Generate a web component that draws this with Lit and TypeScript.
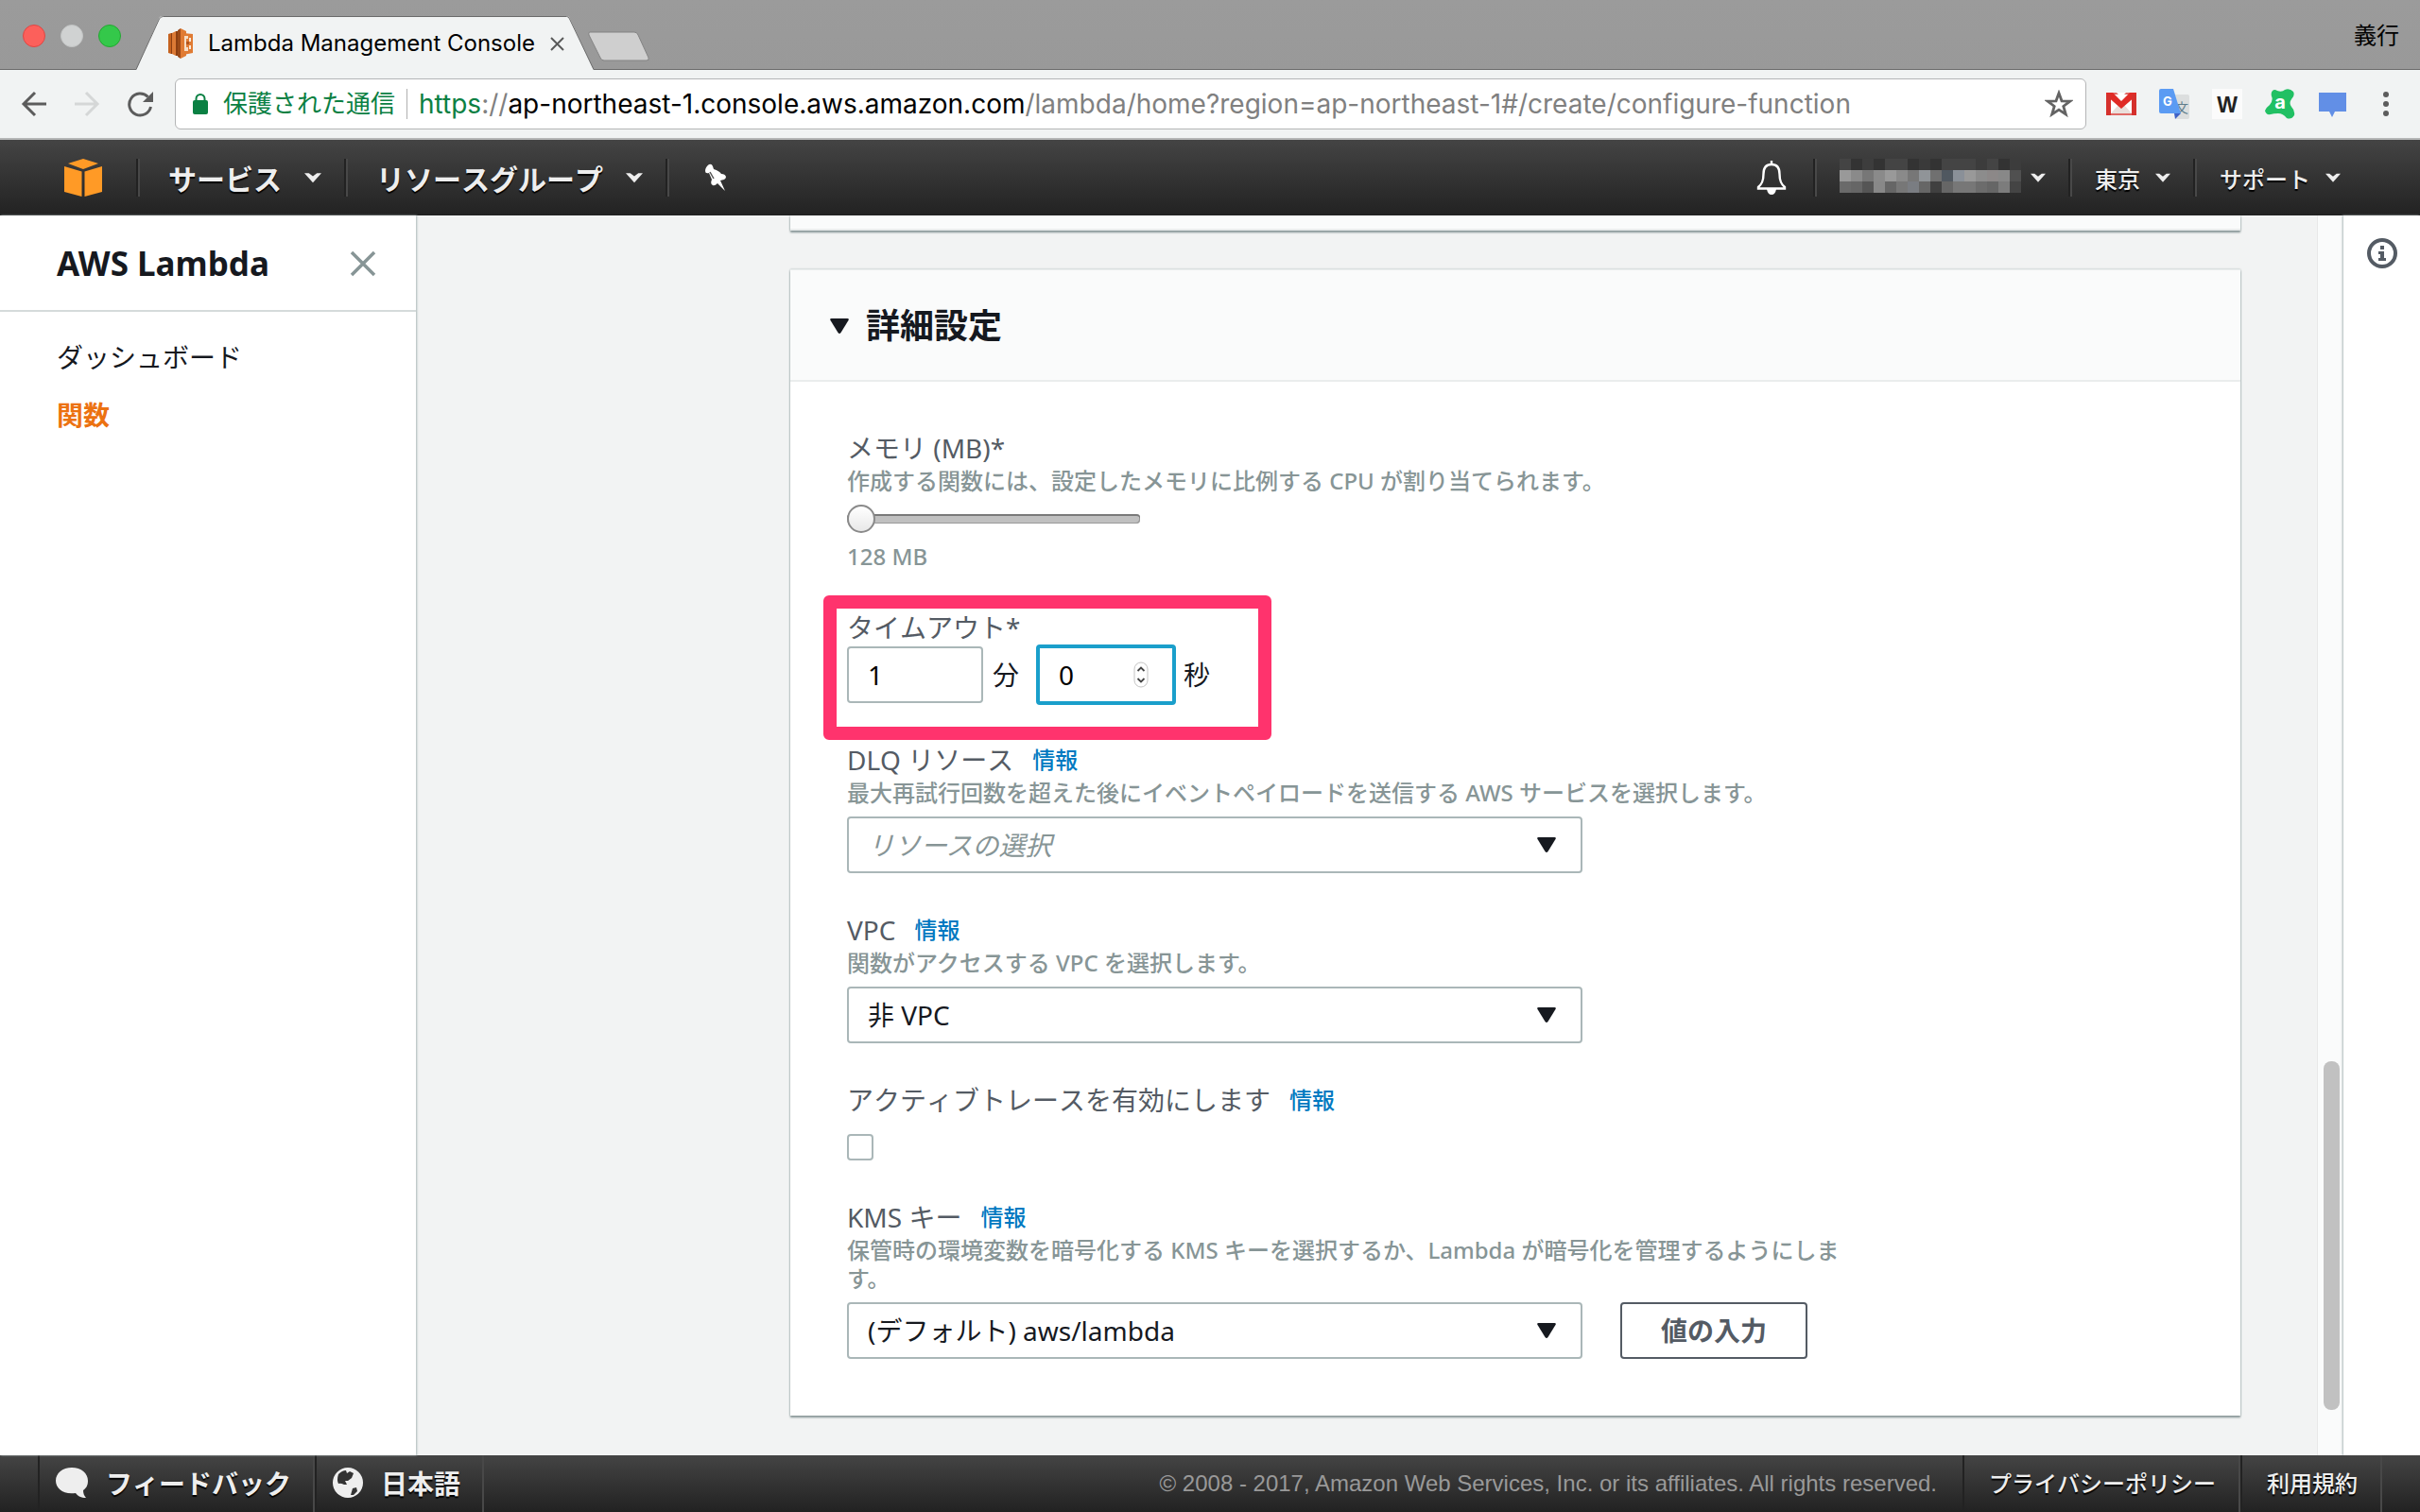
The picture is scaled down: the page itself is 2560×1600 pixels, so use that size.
import { LitElement, html, svg, css } from "lit";
import { customElement, property, state } from "lit/decorators.js";

const caret = (width: number) => html`
  <svg width=${width} height="12" viewBox="0 0 19 12" aria-hidden="true">
    <path d="M0 1h5l4.500 3.500L14 1h5l-9.500 10.500z" fill="currentColor"/>
  </svg>`;

const triangle = html`
  <svg class="triangle" width="20" height="16" viewBox="0 0 20 16" aria-hidden="true">
    <path d="M1.500 0h17q2 0 1 2l-8 13q-1.500 2-3 0l-8-13q-1-2 1-2z" fill="#16191f"/>
  </svg>`;

@customElement("browser-chrome")
export class BrowserChrome extends LitElement {
  @state() private editing = false;

  static styles = css`
    :host {
      display: block;
      font-family: Inter, "Noto Sans CJK JP", sans-serif;
      color: #000;
    }
    button {
      appearance: none;
      border: 0;
      margin: 0;
      padding: 0;
      background: none;
      font: inherit;
      color: inherit;
      text-align: left;
      display: flex;
    }
    svg {
      display: block;
      flex: none;
    }
    .strip {
      display: flex;
      align-items: flex-end;
      height: 74px;
      background: linear-gradient(#9b9b9b, #999);
      box-shadow: inset 0 -1px #6b6b6b;
    }
    .lights {
      display: flex;
      gap: 16px;
      align-self: center;
      padding: 2px 16px 0 24px;
    }
    .light {
      width: 24px;
      height: 24px;
      border-radius: 50%;
      box-sizing: border-box;
    }
    .close {
      background: #fc605b;
      border: 1px solid #de4643;
    }
    .minimize {
      background: #d0d2d2;
      border: 1px solid #c2c4c4;
    }
    .maximize {
      background: #34c84a;
      border: 1px solid #24a732;
    }
    .tab {
      position: relative;
      width: 484px;
      height: 57px;
    }
    .tab-shape {
      position: absolute;
      inset: 0;
    }
    .tab-content {
      position: relative;
      display: flex;
      align-items: center;
      height: 58px;
      padding: 0 36px 0 34px;
      gap: 16px;
    }
    .tab-title {
      flex: 1;
      font-size: 24px;
      line-height: 32px;
      white-space: nowrap;
    }
    .new-tab {
      margin: 0 auto 9px -7px;
    }
    .person {
      align-self: center;
      padding: 2px 22px 0 0;
      font-size: 24px;
      line-height: 32px;
    }
    .toolbar {
      display: flex;
      align-items: center;
      height: 74px;
      box-sizing: border-box;
      padding: 0 20px 0 22px;
      background: #f1f3f3;
      border-bottom: 2px solid #b5b6b6;
    }
    .nav {
      display: flex;
      gap: 28px;
      padding-right: 22px;
    }
    .address {
      flex: 1;
      display: flex;
      align-items: center;
      height: 54px;
      box-sizing: border-box;
      border: 1px solid #b4b5b6;
      border-radius: 6px;
      background: #fff;
      padding: 0 13px 0 18px;
      font-size: 28px;
      line-height: 36px;
      white-space: nowrap;
    }
    .secure {
      align-items: center;
      gap: 16px;
      color: #0b8043;
      padding-right: 12px;
      border-right: 1px solid #b0b0b0;
      font-size: 26px;
      line-height: 32px;
    }
    .url {
      flex: 1;
      display: block;
      padding-left: 12px;
      color: #808080;
    }
    input.url {
      border: 0;
      outline: 0;
      font: inherit;
      color: #000;
    }
    .scheme {
      color: #0b8043;
    }
    .host {
      color: #000;
    }
    .extensions {
      display: flex;
      align-items: center;
      gap: 24px;
      padding-left: 21px;
    }
  `;

  render() {
    return html`
      <div class="strip">
        <div class="lights">
          <button class="light close" aria-label="close window"></button>
          <button class="light minimize" aria-label="minimize window"></button>
          <button class="light maximize" aria-label="maximize window"></button>
        </div>
        <div class="tab">
          <svg class="tab-shape" width="484" height="57" viewBox="0 0 484 57" aria-hidden="true">
            <path d="M0 57L24 3q1-3 4-3h428q2 0 3 3l25 54z" fill="#f1f3f3"/>
            <path d="M0 56.500L24.500 3q1.500-2.500 4-2.500h427q2 0 3 2.500l25.500 53.500" fill="none" stroke="#6b6b6b"/>
          </svg>
          <div class="tab-content">
            <svg width="26" height="32" viewBox="0 0 26 32" aria-hidden="true">
              <path d="M0 6l3-1v22l-3-1z" fill="#c5621f"/>
              <path d="M3 5h1v22H3z" fill="#8c3f12"/>
              <path d="M4 5l4-2v26l-4-2z" fill="#dc7a35"/>
              <path d="M8 3h2v26H8z" fill="#8c3f12"/>
              <path d="M10 2l3-2v32l-3-2z" fill="#9c4a18"/>
              <path d="M13 0l6 3v26l-6 3z" fill="#e07b33"/>
              <path d="M16 5l10 1v20l-10 2z" fill="#e07b33"/>
              <path d="M17 8h4v3h-2v9h2v4h-4z" fill="#f6ddc6"/>
              <path d="M22 10h2v4h-2zM22 18h2v4h-2z" fill="#f9e8d8"/>
              <path d="M19 14h3v3h-3z" fill="#b3541c"/>
            </svg>
            <span class="tab-title">Lambda Management Console</span>
            <button aria-label="close tab">
              <svg width="15" height="15" viewBox="0 0 15 15" aria-hidden="true">
                <path d="M1 1l13 13M14 1L1 14" stroke="#5a5a5a" stroke-width="2" fill="none"/>
              </svg>
            </button>
          </div>
        </div>
        <button class="new-tab" aria-label="new tab">
          <svg width="67" height="32" viewBox="0 0 67 32" aria-hidden="true">
            <path d="M3 1h47q3 0 4 3l11 24q1 3-2 3H18q-3 0-4-3L2 4Q1 1 3 1z" fill="#cfcfcf" stroke="#838383"/>
          </svg>
        </button>
        <span class="person">義行</span>
      </div>
      <div class="toolbar">
        <div class="nav">
          <button aria-label="back">
            <svg width="28" height="28" viewBox="0 0 28 28" fill="none" stroke="#5c5c5c" stroke-width="3" aria-hidden="true">
              <path d="M27 14H3M15 2L3 14l12 12"/>
            </svg>
          </button>
          <button aria-label="forward">
            <svg width="28" height="28" viewBox="0 0 28 28" fill="none" stroke="#d5d7d7" stroke-width="3" aria-hidden="true">
              <path d="M1 14h24M13 2l12 12-12 12"/>
            </svg>
          </button>
          <button aria-label="reload">
            <svg width="29" height="28" viewBox="0 0 29 28" aria-hidden="true">
              <path d="M22.500 6.500A11.500 11.500 0 1 0 25.500 17" fill="none" stroke="#5c5c5c" stroke-width="3"/>
              <path d="M28 1v11H17z" fill="#5c5c5c"/>
            </svg>
          </button>
        </div>
        <div class="address">
          <button class="secure">
            <svg width="16" height="22" viewBox="0 0 16 22" aria-hidden="true">
              <path d="M3.500 9V5.500a4.500 4.500 0 0 1 9 0V9" fill="none" stroke="#0b8043" stroke-width="2"/>
              <rect y="7" width="16" height="15" rx="2" fill="#0b8043"/>
            </svg>
            保護された通信
          </button>
          ${this.editing
            ? html`<input class="url" aria-label="address" autofocus
                .value=${"https://ap-northeast-1.console.aws.amazon.com/lambda/home?region=ap-northeast-1#/create/configure-function"}
                @blur=${() => (this.editing = false)}>`
            : html`<button class="url" @click=${() => (this.editing = true)}><span class="scheme">https</span>://<span class="host">ap-northeast-1.console.aws.amazon.com</span>/lambda/home?region=ap-northeast-1#/create/configure-function</button>`}
          <button aria-label="bookmark">
            <svg width="30" height="30" viewBox="0 0 30 30" aria-hidden="true">
              <path d="M15 3.500l3 8.300 8.800.3-7 5.400 2.500 8.500-7.300-4.900L7.700 26l2.500-8.500-7-5.400 8.800-.3z" fill="none" stroke="#636363" stroke-width="2.800"/>
            </svg>
          </button>
        </div>
        <div class="extensions">
          <button aria-label="Gmail">
            <svg width="32" height="32" viewBox="0 0 32 32" aria-hidden="true">
              <rect y="4" width="32" height="24" rx="1" fill="#e06a66"/>
              <path d="M5 6h22v20H5z" fill="#fff"/>
              <path d="M5 26l8-9 3 3 3-3 8 9z" fill="#eadfdb"/>
              <path d="M0 4h7l9 9 9-9h7v3L16 21 0 7z" fill="#e02b26"/>
              <path d="M11 4h10l-5 5z" fill="#fff"/>
              <path d="M0 6h5v22H0zM27 6h5v22h-5z" fill="#d5302c"/>
            </svg>
          </button>
          <button aria-label="Google Translate">
            <svg width="32" height="32" viewBox="0 0 32 32" aria-hidden="true">
              <path d="M14 6h16q2 0 2 2v22q0 2-2 2H18z" fill="#dcdede"/>
              <text x="17" y="25" font-size="14" font-family="Noto Sans CJK JP" fill="#607d8b">文</text>
              <path d="M16 26h7l-6 6z" fill="#3f62c6"/>
              <path d="M2 0h13l8 26H2q-2 0-2-2V2q0-2 2-2z" fill="#5b9bf3"/>
              <text x="4" y="18" font-size="13" font-weight="700" font-family="Inter" fill="#fff">G</text>
            </svg>
          </button>
          <button aria-label="Wikipedia">
            <svg width="32" height="32" viewBox="0 0 32 32" aria-hidden="true">
              <path d="M0 0h32v32H0z" fill="#fbfbfb"/>
              <text x="16" y="25" text-anchor="middle" font-size="23" font-weight="700" font-family="Liberation Sans" fill="#222">W</text>
            </svg>
          </button>
          <button aria-label="Avast">
            <svg width="32" height="32" viewBox="0 0 32 32" aria-hidden="true">
              <path d="M8 2q2-2 5 0 5 2 8-1 5-2 9 2 2 4-2 8-3 4 0 8 4 4 3 9-3 5-8 3-4-5-9-5t-8 1q-5 1-6-4 1-3 5-6 4-5 2-9-1-4 1-6z" fill="#21c063"/>
              <text x="16" y="21" text-anchor="middle" font-size="20" font-weight="700" font-family="Inter" fill="#fff">a</text>
            </svg>
          </button>
          <button aria-label="chat">
            <svg width="32" height="32" viewBox="0 0 32 32" aria-hidden="true">
              <path d="M1 4h29v20H18l-3 6-3-6H1z" fill="#628fe6"/>
            </svg>
          </button>
          <button aria-label="menu">
            <svg width="32" height="32" viewBox="0 0 32 32" fill="#5c5c5c" aria-hidden="true">
              <circle cx="16" cy="6" r="3"/><circle cx="16" cy="16" r="3"/><circle cx="16" cy="26" r="3"/>
            </svg>
          </button>
        </div>
      </div>
    `;
  }
}

const mosaic = [
  ["#444", "#333", "#3d3d3d", "#333", "#444", "#444", "#333", "#3a3a3a", "#333", "#444", "#444", "#444", "#3c3c3c", "#444", "#333", "#3c3c3c"],
  ["#999", "#8a8a8a", "#777", "#8a8a8a", "#999", "#8a8a8a", "#777", "#909498", "#707070", "#505860", "#8a9098", "#999", "#8c8c8c", "#8c8888", "#888", "#505050"],
  ["#6a6a6a", "#666", "#555", "#888", "#666", "#777", "#7a7d82", "#666", "#404040", "#666", "#777", "#777", "#6c6c6c", "#666", "#7c7c7c", "#444"],
];

@customElement("console-bar")
export class ConsoleBar extends LitElement {
  static styles = css`
    :host {
      display: flex;
      align-items: center;
      height: 80px;
      padding: 0 60px 0 68px;
      box-sizing: border-box;
      background: linear-gradient(#444, #222);
      color: #eee;
      font-family: "Noto Sans CJK JP", sans-serif;
      font-kerning: none;
    }
    svg {
      display: block;
      flex: none;
    }
    a,
    button {
      appearance: none;
      display: flex;
      align-items: center;
      box-sizing: border-box;
      height: 40px;
      margin: 0;
      padding: 0 24px 0 32px;
      border: 0;
      background: none;
      color: inherit;
      font: inherit;
      font-kerning: none;
      text-shadow: 0 2px 1px #000;
      white-space: nowrap;
    }
    .home {
      padding: 0;
      margin-right: 36px;
    }
    .divided {
      border-left: 2px solid #222;
      box-shadow: inset 2px 0 #484848;
    }
    .large {
      font-size: 30px;
      font-weight: 700;
      gap: 24px;
    }
    .pin {
      padding-left: 34px;
    }
    .small {
      font-size: 24px;
      font-weight: 500;
      gap: 16px;
      padding: 0 24px 0 26px;
    }
    .bell {
      margin-left: auto;
      padding: 0 28px;
    }
    .account {
      gap: 10px;
    }
  `;

  render() {
    return html`
      <a class="home" href="#home" aria-label="AWS">
        <svg width="40" height="40" viewBox="0 0 40 40" fill="#ff9a26" aria-hidden="true">
          <path d="M4 5l16-5 16 5-16 6z"/>
          <path d="M0 8l18.500 5.500V40L0 35z"/>
          <path d="M40 8l-18.500 5.500V40L40 35z"/>
        </svg>
      </a>
      <button class="divided large">サービス ${caret(18)}</button>
      <button class="divided large">リソースグループ ${caret(18)}</button>
      <button class="divided pin" aria-label="pin">
        <svg width="30" height="30" viewBox="0 0 30 30" fill="#fff" aria-hidden="true">
          <path d="M10 1q3-1 4 2l1 3q6 2 8 5 4 0 5 3 0 2-2 3l-4 1 5 11-8-8q-3 3-5 2-3-1-1-6l-3-7Q6 11 6 8q0-4 4-7z"/>
          <path d="M11 9l4 7" stroke="#555" stroke-width="1.500"/>
        </svg>
      </button>
      <button class="bell" aria-label="notifications">
        <svg width="32" height="36" viewBox="0 0 32 36" fill="none" stroke="#fff" stroke-width="2.400" aria-hidden="true">
          <path d="M16 4c6 0 8.500 4 8.500 10 0 8 2 11 5.500 14v1.500H2V28c3.500-3 5.500-6 5.500-14C7.500 8 10 4 16 4z"/>
          <path d="M16 0v4"/>
          <path d="M11 30h10q-1 6-5 6t-5-6z" fill="#fff" stroke="none"/>
        </svg>
      </button>
      <button class="divided small account" aria-label="account">
        <svg width="192" height="40" viewBox="0 0 192 40" shape-rendering="crispEdges" aria-hidden="true">
          ${mosaic.map((row, y) => row.map((fill, x) => svg`<rect x=${x * 12} y=${y * 12} width="12" height="12" fill=${fill}/>`))}
        </svg>
        ${caret(16)}
      </button>
      <button class="divided small">東京 ${caret(16)}</button>
      <button class="divided small">サポート ${caret(16)}</button>
    `;
  }
}

@customElement("side-nav")
export class SideNav extends LitElement {
  static styles = css`
    :host {
      display: block;
      background: #fff;
      color: #16191f;
      font-family: "Noto Sans", "Noto Sans CJK JP", sans-serif;
      box-shadow: 1px 0 2px #aab7b8;
      z-index: 1;
    }
    .head {
      display: flex;
      align-items: center;
      justify-content: space-between;
      height: 102px;
      box-sizing: border-box;
      padding: 2px 42px 0 60px;
      border-bottom: 2px solid #d5dbdb;
    }
    h1 {
      margin: 0;
      font-size: 35px;
      line-height: 44px;
      font-weight: 700;
    }
    button {
      appearance: none;
      display: flex;
      border: 0;
      margin: 0;
      padding: 0;
      background: none;
    }
    ul {
      list-style: none;
      margin: 0;
      padding: 28px 60px;
      display: grid;
      gap: 21px;
      font-size: 28px;
      line-height: 40px;
    }
    a {
      color: inherit;
      text-decoration: none;
    }
    .current {
      color: #ec7211;
      font-weight: 700;
    }
  `;

  render() {
    return html`
      <div class="head">
        <h1>AWS Lambda</h1>
        <button aria-label="close">
          <svg width="28" height="28" viewBox="0 0 28 28" aria-hidden="true">
            <path d="M2 2l24 24M26 2L2 26" stroke="#879596" stroke-width="3.500" fill="none"/>
          </svg>
        </button>
      </div>
      <ul>
        <li><a href="#dashboard">ダッシュボード</a></li>
        <li><a class="current" href="#functions" aria-current="page">関数</a></li>
      </ul>
    `;
  }
}

@customElement("settings-card")
export class SettingsCard extends LitElement {
  @property({ type: Number }) memory = 128;

  static styles = css`
    :host {
      display: block;
      background: #fff;
      border-top: 1px solid #eaeded;
      box-shadow: 0 2px 2px #879596, 0 0 2px #aab7b8;
      color: #16191f;
      font-family: "Noto Sans", "Noto Sans CJK JP", sans-serif;
      font-size: 28px;
      line-height: 40px;
    }
    svg {
      display: block;
      flex: none;
    }
    header {
      background: #fafbfb;
      border-bottom: 2px solid #eaeded;
      padding: 37px 42px 35px;
    }
    h2 {
      margin: 0;
      font-size: 36px;
      line-height: 44px;
    }
    button {
      appearance: none;
      box-sizing: border-box;
      margin: 0;
      background: none;
      font: inherit;
      color: inherit;
    }
    .toggle {
      display: flex;
      align-items: center;
      gap: 18px;
      padding: 0;
      border: 0;
    }
    .body {
      display: grid;
      gap: 40px;
      padding: 50px 60px 60px;
    }
    .field {
      position: relative;
      max-width: 1060px;
    }
    .caption {
      display: flex;
      align-items: center;
      gap: 20px;
      color: #545b64;
      font-kerning: none;
    }
    .caption a {
      font-size: 24px;
      font-weight: 500;
      color: #0079c1;
      text-decoration: none;
    }
    .hint {
      margin: 0;
      font-size: 24px;
      line-height: 30px;
      font-weight: 500;
      color: #879596;
    }
    .slider {
      appearance: none;
      display: block;
      width: 310px;
      height: 50px;
      margin: 0;
      background: none;
    }
    .slider::-webkit-slider-runnable-track {
      height: 10px;
      border-radius: 4px;
      background: #c0c0c0;
      box-shadow: inset 0 2px #7a7a7a, inset -1px -1px #9a9a9a;
    }
    .slider::-webkit-slider-thumb {
      appearance: none;
      box-sizing: border-box;
      width: 30px;
      height: 30px;
      margin-top: -10px;
      border: 2px solid #8a8a8a;
      border-radius: 50%;
      background: linear-gradient(#fff, #e8e8e8);
    }
    .duration {
      display: flex;
      align-items: center;
      height: 60px;
    }
    .number {
      position: relative;
      display: flex;
    }
    .number input {
      appearance: textfield;
      box-sizing: border-box;
      width: 144px;
      height: 60px;
      margin: 0;
      padding: 0 20px;
      border: 2px solid #aab7b8;
      border-radius: 4px;
      outline: 0;
      background: #fff;
      color: #000;
      font: inherit;
    }
    .number input::-webkit-inner-spin-button {
      appearance: none;
      margin: 0;
    }
    .number .active {
      width: 148px;
      height: 64px;
      border: 4px solid #1a9fcb;
    }
    .stepper {
      position: absolute;
      right: 29px;
      top: 18px;
    }
    .minutes {
      padding: 0 18px 0 10px;
    }
    .seconds {
      padding-left: 8px;
    }
    .highlight {
      position: absolute;
      left: -25px;
      top: -14px;
      width: 446px;
      height: 125px;
      border: 14px solid #ff336d;
      border-radius: 6px;
      pointer-events: none;
    }
    .row {
      display: flex;
      gap: 40px;
    }
    .select {
      position: relative;
      flex: 0 1 778px;
      margin-top: 10px;
    }
    .select svg {
      position: absolute;
      right: 28px;
      top: 22px;
      pointer-events: none;
    }
    select {
      appearance: none;
      display: block;
      box-sizing: border-box;
      width: 100%;
      height: 60px;
      margin: 0;
      padding: 0 60px 0 20px;
      border: 2px solid #aab7b8;
      border-radius: 4px;
      background: #fff;
      color: #16191f;
      font: inherit;
    }
    .placeholder {
      color: #879596;
      font-style: italic;
    }
    .single {
      display: flex;
    }
    .check {
      appearance: none;
      display: block;
      box-sizing: border-box;
      width: 28px;
      height: 28px;
      margin: 16px 0 0;
      border: 2px solid #aab7b8;
      border-radius: 4px;
      background: #fff;
    }
    .enter {
      margin-top: 10px;
      height: 60px;
      padding: 0 41px;
      border: 2px solid #545b64;
      border-radius: 4px;
      color: #545b64;
      font-weight: 700;
    }
  `;

  private info(topic: string) {
    return html`<a href="#info-${topic}">情報</a>`;
  }

  private select(id: string, value: string, placeholder = false) {
    return html`
      <div class="select">
        <select id=${id} class=${placeholder ? "placeholder" : ""}><option>${value}</option></select>
        ${triangle}
      </div>`;
  }

  render() {
    return html`
      <header>
        <h2><button class="toggle" aria-expanded="true">${triangle} 詳細設定</button></h2>
      </header>
      <div class="body">
        <div class="field">
          <div class="caption"><label for="memory">メモリ (MB)*</label></div>
          <p class="hint">作成する関数には、設定したメモリに比例する CPU が割り当てられます。</p>
          <input id="memory" class="slider" type="range" min="128" max="1536" step="64" .value=${String(this.memory)}
            @input=${(e: Event) => (this.memory = Number((e.target as HTMLInputElement).value))}>
          <p class="hint">${this.memory} MB</p>
        </div>
        <div class="field">
          <div class="caption"><label for="minutes">タイムアウト*</label></div>
          <div class="duration">
            <div class="number"><input id="minutes" type="number" value="1"></div>
            <label class="minutes" for="minutes">分</label>
            <div class="number">
              <input id="seconds" class="active" type="number" value="0">
              <svg class="stepper" width="16" height="28" viewBox="0 0 16 28" fill="none" aria-hidden="true">
                <rect x="1" y="1" width="14" height="26" rx="7" fill="#fff" stroke="#c4c4c4"/>
                <path d="M4.500 10L8 6.500l3.500 3.500M4.500 18L8 21.500l3.500-3.500" stroke="#444" stroke-width="1.800"/>
              </svg>
            </div>
            <label class="seconds" for="seconds">秒</label>
          </div>
          <div class="highlight"></div>
        </div>
        <div class="field">
          <div class="caption"><label for="dlq">DLQ リソース</label>${this.info("dlq")}</div>
          <p class="hint">最大再試行回数を超えた後にイベントペイロードを送信する AWS サービスを選択します。</p>
          <div class="single">${this.select("dlq", "リソースの選択", true)}</div>
        </div>
        <div class="field">
          <div class="caption"><label for="vpc">VPC</label>${this.info("vpc")}</div>
          <p class="hint">関数がアクセスする VPC を選択します。</p>
          <div class="single">${this.select("vpc", "非 VPC")}</div>
        </div>
        <div class="field">
          <div class="caption"><label for="trace">アクティブトレースを有効にします</label>${this.info("trace")}</div>
          <input id="trace" class="check" type="checkbox">
        </div>
        <div class="field">
          <div class="caption"><label for="kms">KMS キー</label>${this.info("kms")}</div>
          <p class="hint">保管時の環境変数を暗号化する KMS キーを選択するか、Lambda が暗号化を管理するようにします。</p>
          <div class="row">
            ${this.select("kms", "(デフォルト) aws/lambda")}
            <button class="enter">値の入力</button>
          </div>
        </div>
      </div>
    `;
  }
}

@customElement("console-footer")
export class ConsoleFooter extends LitElement {
  static styles = css`
    :host {
      display: flex;
      align-items: stretch;
      height: 60px;
      padding: 0 40px;
      box-sizing: border-box;
      background: linear-gradient(#444, #222);
      color: #eee;
      font-family: "Noto Sans CJK JP", sans-serif;
      font-size: 24px;
      font-weight: 500;
      white-space: nowrap;
    }
    a,
    button {
      appearance: none;
      display: flex;
      align-items: center;
      margin: 0;
      padding: 0 26px 3px;
      border: 0;
      border-left: 2px solid #222;
      box-shadow: inset -2px 0 #484848;
      background: none;
      color: inherit;
      font: inherit;
      font-kerning: none;
      text-decoration: none;
      text-shadow: 0 2px 1px #000;
    }
    button {
      gap: 18px;
      padding: 0 25px 3px 16px;
      font-size: 28px;
      font-weight: 700;
    }
    small {
      display: flex;
      align-items: center;
      margin-left: auto;
      padding-right: 27px;
      color: #999;
      font-family: "Liberation Sans", Arial, sans-serif;
      font-size: 24px;
      font-weight: 400;
    }
  `;

  render() {
    return html`
      <button>
        <svg width="36" height="34" viewBox="0 0 36 34" aria-hidden="true">
          <path d="M18 1c10 0 17 6 17 14 0 5-2 8-5 10 0 3 1 6 3 8-5 0-9-2-11-5-13 2-21-5-21-13C1 7 8 1 18 1z" fill="#eee"/>
        </svg>
        フィードバック
      </button>
      <button>
        <svg width="34" height="34" viewBox="0 0 34 34" aria-hidden="true">
          <circle cx="17" cy="17" r="16" fill="#eee"/>
          <path d="M7 8q4-4 8-4l1 3 3-2 4 2-2 5-4 3-3 0 2 4-3 0q-4-2-6-1-2-4 0-10zM22 23l4-1 1 4-4 4-3 0z" fill="#333"/>
        </svg>
        日本語
      </button>
      <small>© 2008 - 2017, Amazon Web Services, Inc. or its affiliates. All rights reserved.</small>
      <a href="#privacy">プライバシーポリシー</a>
      <a href="#terms">利用規約</a>
    `;
  }
}

@customElement("app-root")
export class AppRoot extends LitElement {
  static styles = css`
    :host {
      display: flex;
      flex-direction: column;
      height: 100vh;
      overflow: hidden;
      background: #f2f3f3;
    }
    browser-chrome,
    console-bar,
    console-footer {
      flex: none;
    }
    .workspace {
      flex: 1;
      min-height: 0;
      display: grid;
      grid-template-columns: 440px minmax(0, 1fr) 28px 81px;
    }
    main {
      overflow: hidden;
      padding: 0 81px 0 396px;
    }
    .previous {
      height: 14px;
      margin-bottom: 41px;
      background: #fafbfb;
      border-bottom: 2px solid #eaeded;
      box-shadow: 0 2px 2px #879596, 0 0 2px #aab7b8;
    }
    .track {
      display: grid;
      grid-template-rows: 895fr 369fr 48fr;
      padding: 0 4px 0 6px;
      background: #fafbfb;
      border-left: 1px solid #e8e8e8;
    }
    .thumb {
      grid-row: 2;
      border-radius: 8px;
      background: #c1c1c1;
    }
    .help {
      background: #fff;
      box-shadow: -1px 0 2px #aab7b8;
      padding: 24px 24px 0 25px;
    }
    .help button {
      appearance: none;
      display: flex;
      border: 0;
      margin: 0;
      padding: 0;
      background: none;
    }
  `;

  render() {
    return html`
      <browser-chrome></browser-chrome>
      <console-bar></console-bar>
      <div class="workspace">
        <side-nav></side-nav>
        <main>
          <div class="previous"></div>
          <settings-card></settings-card>
        </main>
        <div class="track"><div class="thumb"></div></div>
        <aside class="help">
          <button aria-label="info">
            <svg width="32" height="32" viewBox="0 0 32 32" aria-hidden="true">
              <circle cx="16" cy="16" r="14" fill="none" stroke="#545b64" stroke-width="4"/>
              <path d="M14 8h4v4h-4zM12 14h6v7h2v3h-8v-3h2v-4h-2z" fill="#545b64"/>
            </svg>
          </button>
        </aside>
      </div>
      <console-footer></console-footer>
    `;
  }
}
